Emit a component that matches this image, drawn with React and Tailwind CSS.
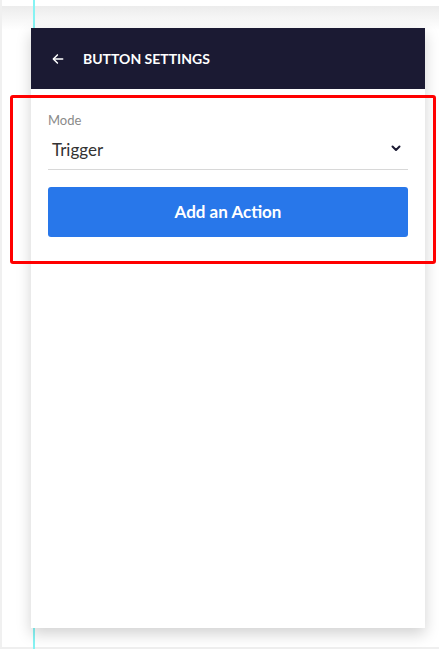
import React from "react";

const App = () => {
  return (
    <div className="relative w-[439px] h-[649px] overflow-hidden bg-white" style={{ fontFamily: "Lato, 'Open Sans', sans-serif" }}>
      {/* top toolbar shadow + page frame */}
      <div className="absolute inset-x-0 top-[6px] h-[24px] bg-gradient-to-b from-[#ececec] to-white" />
      <div className="absolute left-0 top-0 bottom-0 w-[2px] bg-[#f0f0f0]" />
      <div className="absolute left-0 right-0 bottom-0 h-[2px] bg-[#efefef]" />
      {/* guide line */}
      <div className="absolute left-[33px] top-0 bottom-0 w-[2px] bg-[#86f3f3]" />

      <div className="relative ml-[31px] mt-[28px] w-[394px] h-[600px] bg-white shadow-[0_6px_14px_rgba(0,0,0,0.18)]">
        <div className="h-[61px] bg-[#1b1a33] flex items-center pl-[20px]">
          <svg width="14" height="14" viewBox="0 0 24 24" fill="none" stroke="white" strokeWidth="2.6" strokeLinecap="round" strokeLinejoin="round">
            <path d="M20 12H5" />
            <path d="M11 5l-7 7 7 7" />
          </svg>
          <span className="ml-[18px] text-white text-[14px] font-bold">BUTTON SETTINGS</span>
        </div>

        <div className="px-[17px] pt-[24px]">
          <div className="text-[13px] text-[#8a8a8a] leading-[14px]">Mode</div>
          <div className="flex items-center justify-between h-[43px] border-b border-[#d8d8d8] pl-[4px] pr-[6px]">
            <span className="text-[17px] text-[#333] pt-[4px]">Trigger</span>
            <svg width="12" height="12" viewBox="0 0 24 24" fill="none" stroke="#1b1a33" strokeWidth="4" strokeLinecap="round" strokeLinejoin="round">
              <path d="M5 9l7 7 7-7" />
            </svg>
          </div>
          <button className="mt-[17px] w-full h-[50px] rounded-[3px] bg-[#2877ea] text-white text-[17px] font-bold">
            Add an Action
          </button>
        </div>
      </div>

      {/* annotation box */}
      <div className="absolute left-[10px] top-[95px] w-[426px] h-[169px] border-[3px] border-[#ff0000] rounded-[3px]" />
    </div>
  );
};

export default App;
